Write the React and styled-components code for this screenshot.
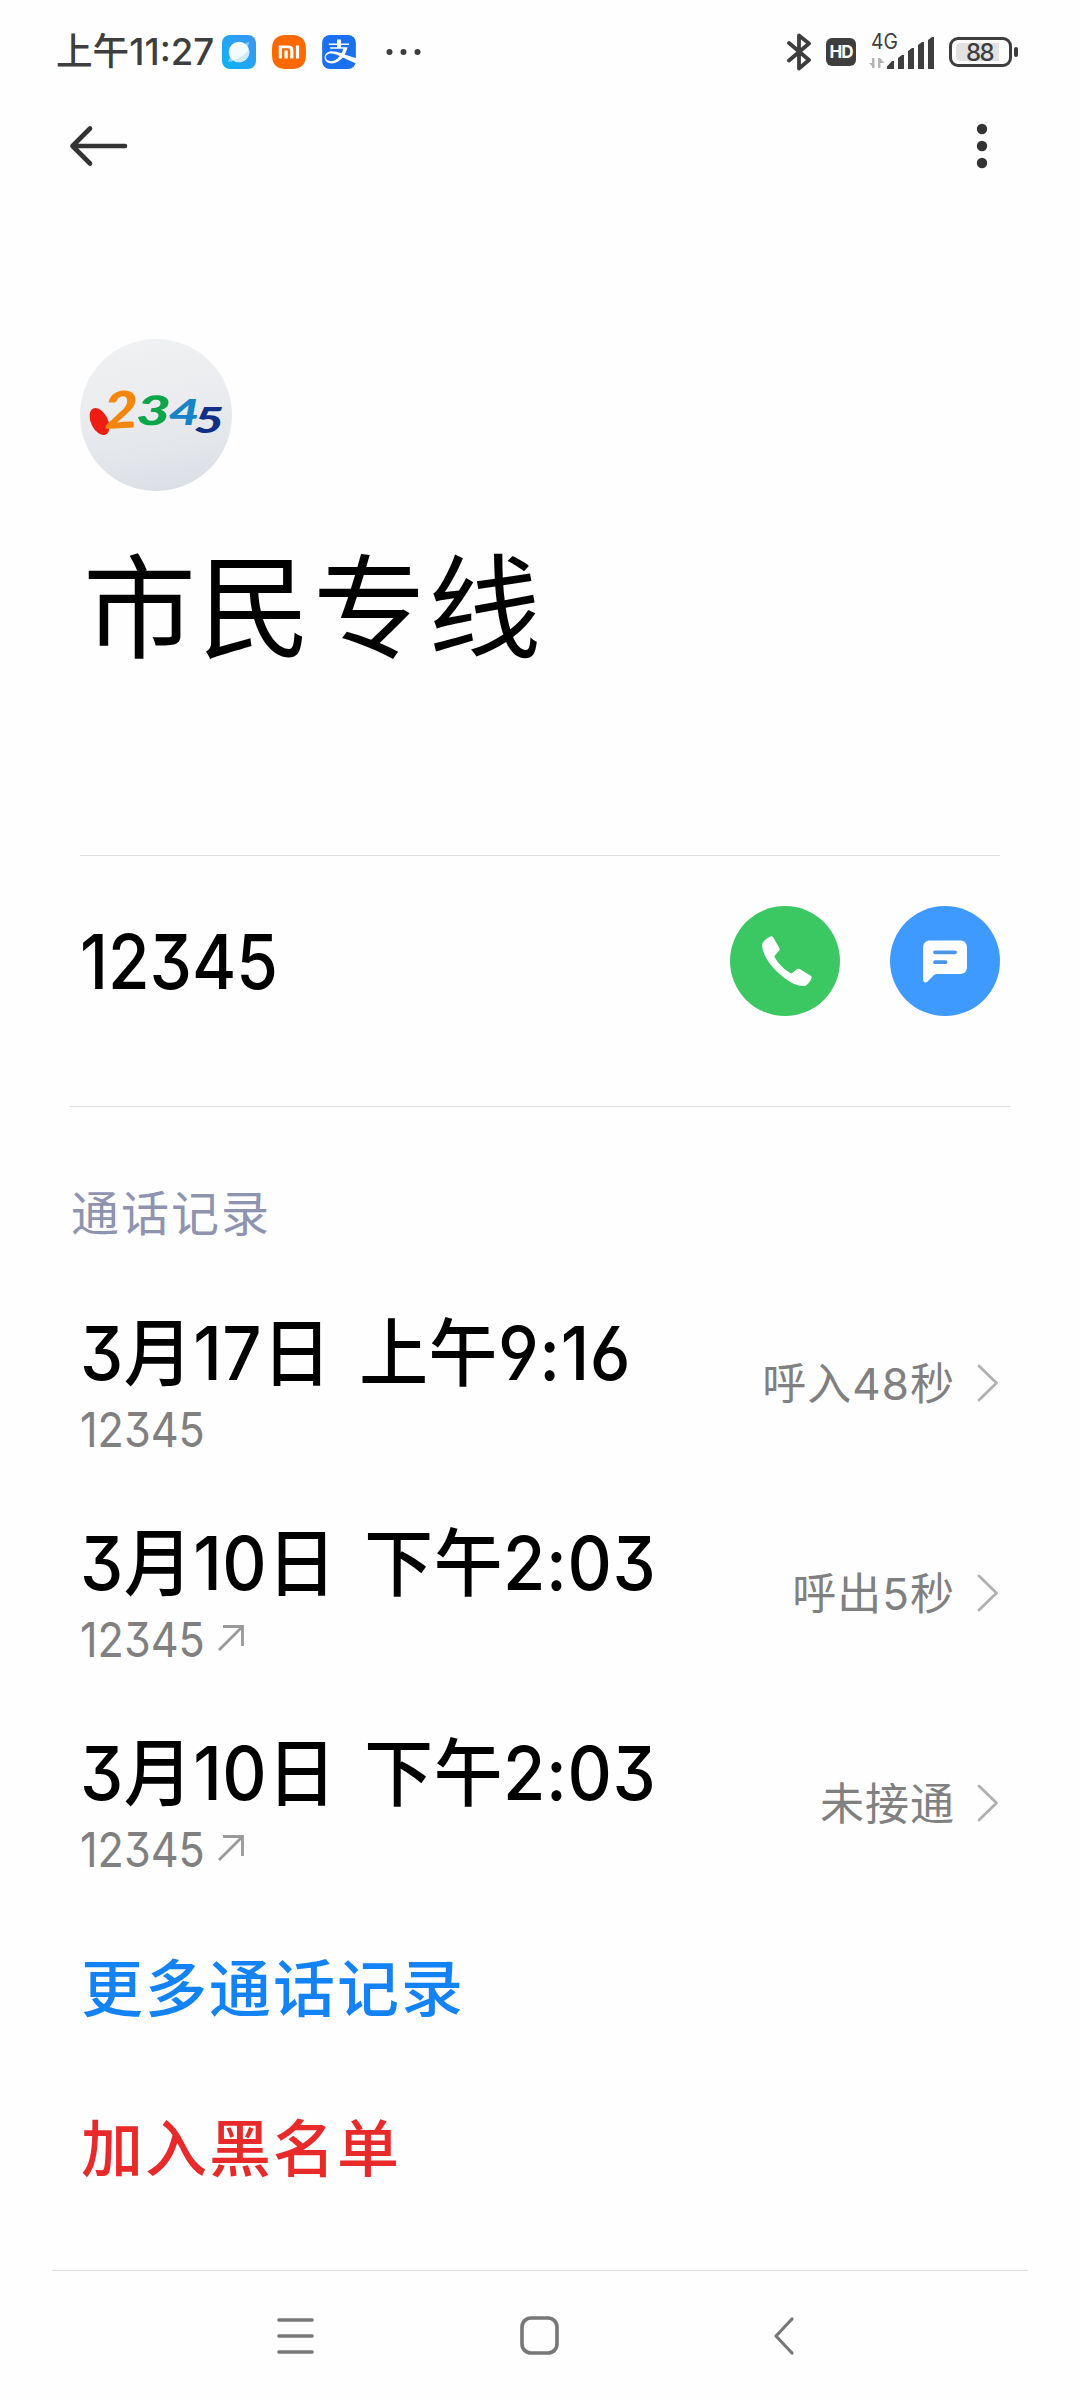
import styled, { createGlobalStyle } from 'styled-components';
import { SiAlipay, SiXiaomi } from 'react-icons/si';

const GlobalStyle = createGlobalStyle`
  * {
    box-sizing: border-box;
  }
  body {
    margin: 0;
    background: #fefefe;
  }
  button {
    border: 0;
    padding: 0;
    background: none;
  }
`;

const Page = styled.div`
  width: 1080px;
  height: 2400px;
  display: flex;
  flex-direction: column;
  background: #fefefe;
  color: #000;
  font-family: Inter, 'Noto Sans CJK SC', sans-serif;
  font-feature-settings: 'cv09', 'cv03', 'cv04';
  font-kerning: none;
  white-space: pre;
`;

const StatusBar = styled.header`
  height: 104px;
  padding: 0 62px 0 55px;
  display: flex;
  justify-content: space-between;
  align-items: center;
  color: #3e3e3e;
`;

const StatusGroup = styled.div`
  display: flex;
  align-items: center;
`;

const Clock = styled.span`
  width: 167px;
  padding-left: 1px;
  font-size: 37px;
  font-weight: 500;
  line-height: 46px;
  transform: scaleX(0.99);
  transform-origin: left;
`;

const AppIcons = styled.div`
  display: flex;
  gap: 16px;
  margin-right: 30px;

  svg {
    display: block;
    width: 34px;
    height: 34px;
    border-radius: 8px;
  }
`;

// the brand glyphs are punched out of their tile, so the gap is the background
const MiIcon = styled(SiXiaomi)`
  color: #ff6900;
  background: #fff;
`;

const PayIcon = styled(SiAlipay)`
  color: #1a70ee;
  background: #fff;
`;

const HdBadge = styled.span`
  width: 30px;
  height: 28px;
  margin: 0 13px 0 14px;
  border-radius: 6px;
  background: #3e3e3e;
  color: #fff;
  font-size: 17px;
  font-weight: 700;
  line-height: 28px;
  text-align: center;
  letter-spacing: -1px;
`;

const Signal = styled.div`
  width: 66px;
  height: 36px;
  margin-right: 14px;
  position: relative;

  span {
    position: absolute;
    top: -2px;
    left: 2px;
    font-size: 21px;
    line-height: 20px;
    transform: scaleX(0.92);
    transform-origin: left;
  }
`;

const Battery = styled.div`
  width: 63px;
  height: 30px;
  padding: 3px 10px 3px 4px;
  border: 3px solid #3e3e3e;
  border-radius: 9px;
`;

const BatteryLevel = styled.div`
  height: 18px;
  padding-left: 4px;
  border-radius: 4px 0 0 4px;
  background: #e2e2e2;
  font-size: 24px;
  font-weight: 500;
  line-height: 19px;
  text-align: center;
  letter-spacing: -1.5px;
`;

const BatteryCap = styled.i`
  width: 4px;
  height: 10px;
  margin-left: 2px;
  border-radius: 2px;
  background: #3e3e3e;
`;

const Toolbar = styled.nav`
  height: 84px;
  padding: 0 92px 0 68px;
  display: flex;
  justify-content: space-between;
  align-items: center;
`;

const IconButton = styled.button`
  display: flex;
`;

const Profile = styled.section`
  height: 668px;
  margin: 0 80px;
  padding-top: 151px;
  border-bottom: 1px solid #dedede;
`;

const Avatar = styled.svg`
  display: block;
  width: 152px;
  height: 152px;
  border-radius: 50%;
`;

const Name = styled.h1`
  margin: 50px 0 0 3px;
  font-size: 113px;
  font-weight: 400;
  line-height: 134px;
  letter-spacing: 2px;
`;

const NumberRow = styled.section`
  height: 251px;
  margin: 0 70px;
  padding: 50px 10px 0;
  display: flex;
  align-items: flex-start;
  gap: 50px;
  border-bottom: 1px solid #dedede;
`;

const PhoneNumber = styled.div`
  flex: 1;
  font-size: 75px;
  font-weight: 500;
  line-height: 111px;
  transform: scaleX(0.9);
  transform-origin: left;
`;

const RoundButton = styled.button`
  width: 110px;
  height: 110px;
  border-radius: 50%;
  background: ${({ $color }) => $color};

  svg {
    display: block;
  }
`;

const SectionTitle = styled.h2`
  height: 171px;
  margin: 0 70px;
  padding: 75px 0 0 1px;
  color: #8e94b0;
  font-size: 48px;
  font-weight: 400;
  line-height: 64px;
  letter-spacing: 2px;
`;

const CallList = styled.ul`
  margin: 0;
  padding: 0 80px;
  list-style: none;
`;

const CallItem = styled.li`
  height: 210px;
  display: flex;
  align-items: center;
`;

const CallInfo = styled.div`
  flex: 1;
  padding-top: 15px;
`;

const CallDate = styled.div`
  font-size: 74px;
  font-weight: 500;
  line-height: 76px;
  letter-spacing: 0.6px;
  word-spacing: -5.5px;
  transform: scaleX(0.93);
  transform-origin: left;
`;

const CallNumber = styled.div`
  height: 76px;
  display: flex;
  align-items: center;
  color: #808080;
  font-size: 48px;
  line-height: 76px;

  span {
    width: 137px;
    padding-top: 2px;
    transform: scaleX(0.9);
    transform-origin: left;
  }

  svg {
    margin-bottom: 2px;
  }
`;

const CallResult = styled.div`
  margin-right: 22px;
  padding-top: 2px;
  color: #808080;
  font-size: 44px;
  line-height: 60px;
  letter-spacing: 1px;
`;

const Chevron = styled.svg`
  margin-right: 1px;
`;

const TextAction = styled.button`
  display: block;
  height: 160px;
  margin-left: 81px;
  padding-top: 4px;
  color: ${({ $color }) => $color};
  font-family: inherit;
  font-size: 62px;
  font-weight: 500;
  line-height: 156px;
  letter-spacing: 2px;
  text-align: left;
`;

const NavBar = styled.footer`
  height: 130px;
  margin: auto 52px 0;
  padding: 0 233px 0 223px;
  display: grid;
  grid-template-columns: 42px 1fr 22px;
  justify-items: center;
  align-items: center;
  border-top: 1px solid #dedede;
`;

const HomeIcon = styled.svg`
  margin-right: 10px;
`;

const calls = [
  { id: 1, date: '3月17日  上午9:16', result: '呼入48秒', outgoing: false },
  { id: 2, date: '3月10日  下午2:03', result: '呼出5秒', outgoing: true },
  { id: 3, date: '3月10日  下午2:03', result: '未接通', outgoing: true },
];

const BrowserIcon = () => (
  <svg viewBox='0 0 34 34'>
    <defs>
      <linearGradient id='browser' x1='0' y1='1' x2='1' y2='0'>
        <stop offset='0' stopColor='#0bb4f2' />
        <stop offset='1' stopColor='#3d93f5' />
      </linearGradient>
    </defs>
    <rect width='34' height='34' fill='url(#browser)' />
    <path d='M6 27c1-6 14-19 21-20 1 5-14 21-21 20z' fill='#7fd0fb' />
    <circle cx='17' cy='17' r='10.3' fill='#f4fbff' />
    <path d='M27 14a10.3 10.3 0 0 1-16 11c6-1 12-5 16-11z' fill='#cfe9fb' />
  </svg>
);

const BluetoothIcon = () => (
  <svg width='26' height='38' viewBox='0 0 26 38' fill='none' stroke='#3e3e3e' strokeWidth='3.8' strokeLinejoin='round' strokeLinecap='round'>
    <path d='M3 10l20 17-10 8.5V2.500L23 10.500 3 27.500' />
  </svg>
);

const SignalIcon = () => (
  <svg width='66' height='36' viewBox='0 0 66 36'>
    <path d='M3 24h2.500v10H3zM5 34L0 29h5zM9 24h2.500v10H9zM11 24l4.500 5H11z' fill='#b5b5b5' />
    <g fill='#3e3e3e'>
      <path d='M18 35v-2.500l5-5.500h2v8zM29 35V24l4-3h2v14zM39 35V17l4-3h2v21zM49 35V11l4-3h2v27zM59 35V6l4-3h2v32z' />
    </g>
  </svg>
);

const AvatarLogo = () => (
  <Avatar viewBox='0 0 152 152'>
    <defs>
      <linearGradient id='avatar' x1='0.3' y1='0' x2='0.5' y2='1'>
        <stop offset='0' stopColor='#f0f1f2' />
        <stop offset='0.5' stopColor='#e9ebee' />
        <stop offset='1' stopColor='#dce0e6' />
      </linearGradient>
    </defs>
    <rect width='152' height='152' fill='url(#avatar)' />
    <ellipse cx='19.500' cy='82.500' rx='8.5' ry='14.500' transform='rotate(-26 19.500 82.500)' fill='#ee1c12' />
    <g fontFamily='Lato, sans-serif' fontWeight='900' fontStyle='italic' textAnchor='middle'>
      <text transform='translate(42 89) rotate(-3) scale(1.18 1)' fontSize='51' fill='#f5860d'>2</text>
      <text transform='translate(73 86) rotate(2) scale(1.45 1)' fontSize='41' fill='#0ea54a'>3</text>
      <text transform='translate(104 86) rotate(0) scale(1.45 1)' fontSize='37' fill='#1784c8'>4</text>
      <text transform='translate(129 94) rotate(0) scale(1.45 1)' fontSize='36' fill='#112f86'>5</text>
    </g>
  </Avatar>
);

const PhoneIcon = () => (
  <svg width='110' height='110' viewBox='0 0 110 110'>
    <path
      d='M34.500 34.500c2-2 4-3.200 6-4 1.200-.5 2.200 0 2.800 1l6 10.500c.6 1.100.4 2-.4 2.900l-4 4.600c-.5.6-.5 1.200-.1 1.900 3.600 6.300 8.500 11.200 15.300 15.600.8.500 1.400.4 2-.1l4.500-3.600c1-.7 2-.8 3-.2l10.800 6.300c1.300.8 1.600 1.800 1 3.100-1 2.500-2.500 4.300-4.200 6-1 1-2.200 1.500-3.700 1.500-6 0-12.500-3-18.500-7.500C42.500 63 34 52 32.200 41c-.4-2.700.5-4.700 2.300-6.500z'
      fill='#fff'
    />
  </svg>
);

const MessageIcon = () => (
  <svg width='110' height='110' viewBox='0 0 110 110' fill='none'>
    <path
      d='M33 73V42c0-5 2.500-7.500 7.500-7.500h29c5 0 7.500 2.500 7.500 7.500v18.500c0 5-2.500 7.500-7.500 7.500H47c-1.500 0-2.500.5-3.500 1.500l-6 6c-2 2-4.500.5-4.500-2.500z'
      fill='#fff'
    />
    <path d='M45 46.300h20M45 56.200h10.500' stroke='#4a95ea' strokeWidth='3.800' strokeLinecap='round' />
  </svg>
);

const OutgoingIcon = () => (
  <svg width='28' height='28' viewBox='0 0 28 28' fill='none' stroke='#999' strokeWidth='2.8'>
    <path d='M2 26L25.500 2.500M6 2.500h19.500V22' />
  </svg>
);

const Call = ({ call }) => {
  const { date, result, outgoing } = call;

  return (
    <CallItem>
      <CallInfo>
        <CallDate>{date}</CallDate>
        <CallNumber>
          <span>12345</span>
          {outgoing && <OutgoingIcon />}
        </CallNumber>
      </CallInfo>
      <CallResult>{result}</CallResult>
      <Chevron width='22' height='38' viewBox='0 0 22 38' fill='none' stroke='#b0b0b0' strokeWidth='2.8' strokeLinecap='round' strokeLinejoin='round'>
        <path d='M2 2l17.500 17L2 36' />
      </Chevron>
    </CallItem>
  );
};

const App = () => (
  <>
    <GlobalStyle />
    <Page>
      <StatusBar>
        <StatusGroup>
          <Clock>上午11:27</Clock>
          <AppIcons>
            <BrowserIcon />
            <MiIcon />
            <PayIcon />
          </AppIcons>
          <svg width='36' height='8' fill='#3e3e3e'>
            <circle cx='3.500' cy='4' r='3' />
            <circle cx='17.500' cy='4' r='3' />
            <circle cx='31.500' cy='4' r='3' />
          </svg>
        </StatusGroup>
        <StatusGroup>
          <BluetoothIcon />
          <HdBadge>HD</HdBadge>
          <Signal>
            <span>4G</span>
            <SignalIcon />
          </Signal>
          <Battery>
            <BatteryLevel>88</BatteryLevel>
          </Battery>
          <BatteryCap />
        </StatusGroup>
      </StatusBar>
      <Toolbar>
        <IconButton aria-label='返回'>
          <svg width='62' height='44' viewBox='0 0 62 44' fill='none' stroke='#333' strokeWidth='4.600' strokeLinecap='round' strokeLinejoin='round'>
            <path d='M57 22H4.500M22 4.500L4.500 22 22 39.500' />
          </svg>
        </IconButton>
        <IconButton aria-label='更多'>
          <svg width='12' height='46' fill='#333'>
            <circle cx='6' cy='6' r='5.200' />
            <circle cx='6' cy='23' r='5.200' />
            <circle cx='6' cy='40' r='5.200' />
          </svg>
        </IconButton>
      </Toolbar>
      <Profile>
        <AvatarLogo />
        <Name>市民专线</Name>
      </Profile>
      <NumberRow>
        <PhoneNumber>12345</PhoneNumber>
        <RoundButton $color='#3bc862' aria-label='拨打'>
          <PhoneIcon />
        </RoundButton>
        <RoundButton $color='#3e9aff' aria-label='短信'>
          <MessageIcon />
        </RoundButton>
      </NumberRow>
      <SectionTitle>通话记录</SectionTitle>
      <CallList>
        {calls.map((call) => (
          <Call key={call.id} call={call} />
        ))}
      </CallList>
      <TextAction $color='#1382f5'>更多通话记录</TextAction>
      <TextAction $color='#e82a2a'>加入黑名单</TextAction>
      <NavBar>
        <svg width='42' height='40' fill='none' stroke='#777' strokeWidth='3.600' strokeLinecap='round'>
          <path d='M4 4h33M4 20h33M4 36h33' />
        </svg>
        <HomeIcon width='42' height='42' fill='none' stroke='#777' strokeWidth='3.600'>
          <rect x='3' y='3' width='35' height='35' rx='9' />
        </HomeIcon>
        <svg width='22' height='40' fill='none' stroke='#777' strokeWidth='3.200' strokeLinecap='round' strokeLinejoin='round'>
          <path d='M19 3L3 20l16 17' />
        </svg>
      </NavBar>
    </Page>
  </>
);

export default App;
